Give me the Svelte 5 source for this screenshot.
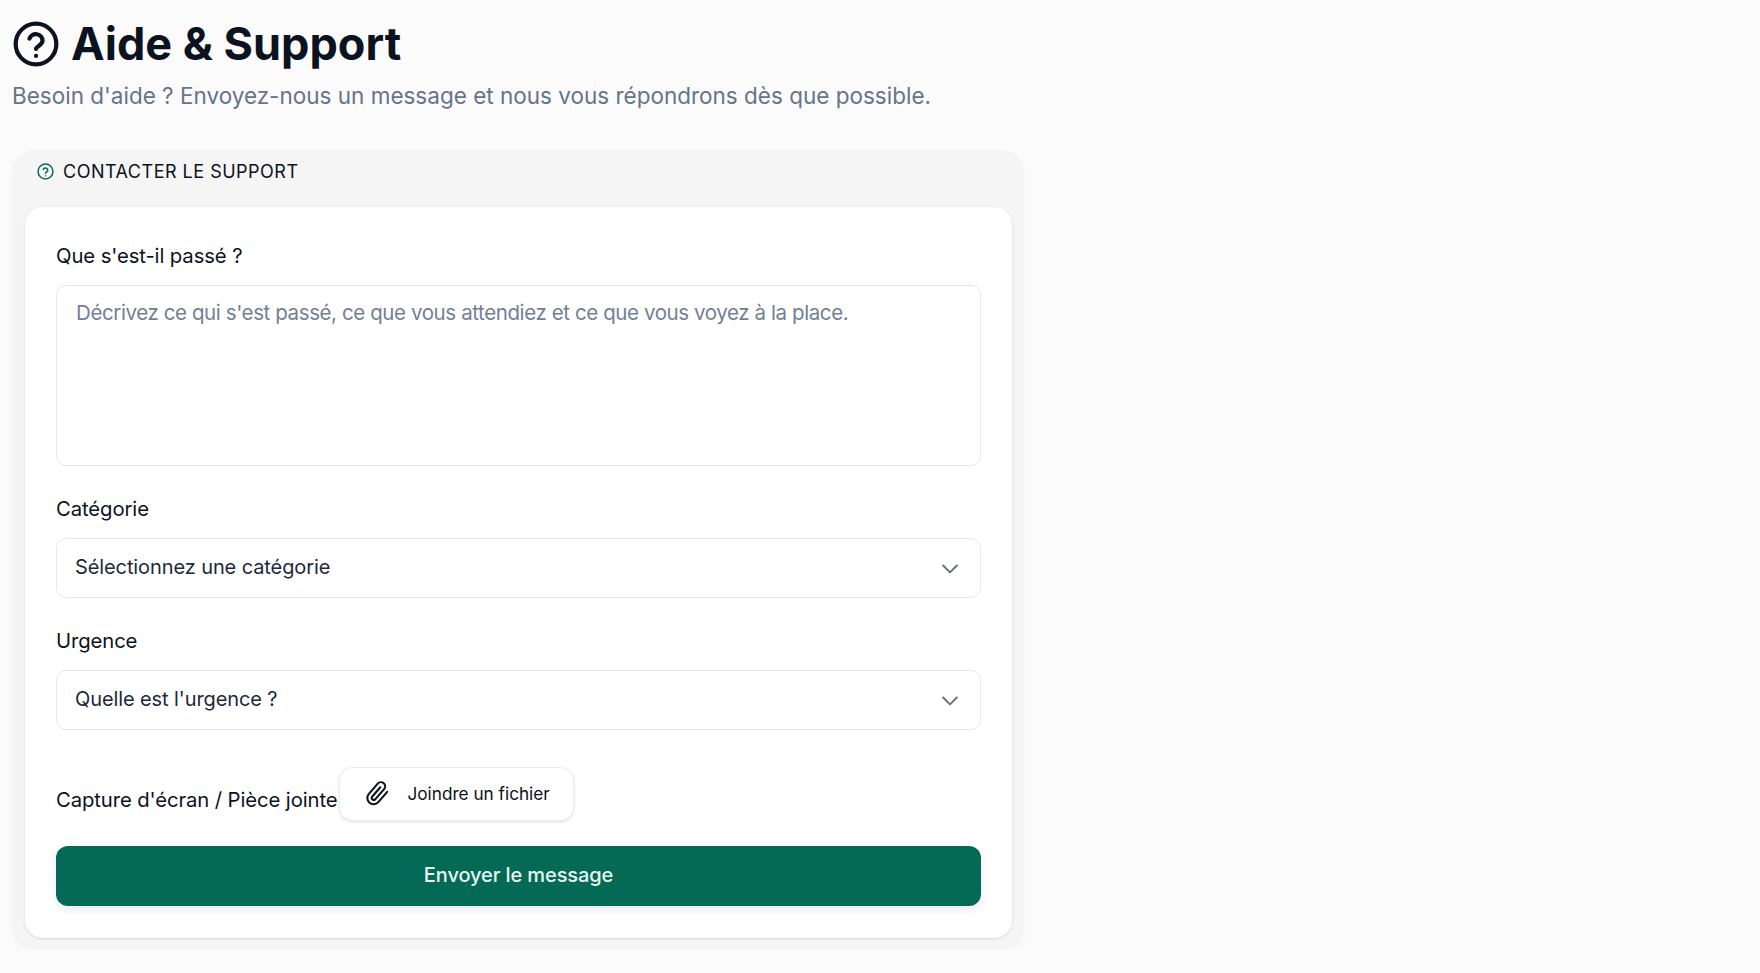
<script lang="ts">
	let message = $state('');
	let category = $state('');
	let urgency = $state('');
</script>

<main class="page">
	<header class="page-header">
		<h1>
			<svg class="title-icon" viewBox="0 0 24 24" fill="none" stroke="currentColor" stroke-width="2.2" stroke-linecap="round" stroke-linejoin="round">
				<circle cx="12" cy="12" r="10.6"></circle>
				<path d="M8.6 9.2a3.5 3.5 0 0 1 6.8 1.1c0 2.3-3.4 2.9-3.4 4.3"></path>
				<path d="M12 18.2h.01"></path>
			</svg>
			Aide &amp; Support
		</h1>
		<p class="subtitle">Besoin d'aide ? Envoyez-nous un message et nous vous répondrons dès que possible.</p>
	</header>

	<section class="panel">
		<div class="panel-title">
			<svg class="panel-icon" viewBox="0 0 24 24" fill="none" stroke="currentColor" stroke-width="2.2" stroke-linecap="round" stroke-linejoin="round">
				<circle cx="12" cy="12" r="10.5"></circle>
				<path d="M8.8 9.2a3.3 3.3 0 0 1 6.4 1c0 2.2-3.2 2.7-3.2 4.2"></path>
				<path d="M12 18h.01"></path>
			</svg>
			<span>CONTACTER LE SUPPORT</span>
		</div>

		<form class="card" onsubmit={(e) => e.preventDefault()}>
			<label class="field first">
				<span class="label">Que s'est-il passé ?</span>
				<textarea bind:value={message} placeholder="Décrivez ce qui s'est passé, ce que vous attendiez et ce que vous voyez à la place."></textarea>
			</label>

			<label class="field">
				<span class="label">Catégorie</span>
				<span class="select-wrap">
					<select bind:value={category}>
						<option value="">Sélectionnez une catégorie</option>
					</select>
					<svg class="chevron" viewBox="0 0 16 16" fill="none" stroke="currentColor" stroke-width="1.6" stroke-linecap="round" stroke-linejoin="round">
						<path d="M2.5 5.2 8 10.7l5.5-5.5"></path>
					</svg>
				</span>
			</label>

			<label class="field">
				<span class="label">Urgence</span>
				<span class="select-wrap">
					<select bind:value={urgency}>
						<option value="">Quelle est l'urgence ?</option>
					</select>
					<svg class="chevron" viewBox="0 0 16 16" fill="none" stroke="currentColor" stroke-width="1.6" stroke-linecap="round" stroke-linejoin="round">
						<path d="M2.5 5.2 8 10.7l5.5-5.5"></path>
					</svg>
				</span>
			</label>

			<div class="attach-row">
				<span class="label">Capture d'écran / Pièce jointe</span>
				<button type="button" class="attach">
					<svg class="clip" viewBox="0 0 24 24" fill="none" stroke="currentColor" stroke-width="2" stroke-linecap="round" stroke-linejoin="round">
						<path d="M21.4 11.1l-9.2 9.2a6 6 0 0 1-8.5-8.5l9.2-9.2a4 4 0 0 1 5.7 5.7l-9.2 9.2a2 2 0 0 1-2.8-2.8l8.5-8.5"></path>
					</svg>
					Joindre un fichier
				</button>
			</div>

			<button type="submit" class="submit">Envoyer le message</button>
		</form>
	</section>
</main>

<style>
	:global(body) {
		background: #fbfbfc;
		font-family: Inter, "Noto Sans", sans-serif;
		color: #0f172a;
	}

	.page {
		width: 1024px;
		padding: 17px 0 0 12px;
		box-sizing: border-box;
	}

	.page-header {
		margin-bottom: 38px;
	}

	h1 {
		display: flex;
		align-items: center;
		gap: 12px;
		margin: 0;
		height: 52px;
		padding-left: 1px;
		font-size: 45px;
		font-weight: 700;
		color: #0b1220;
	}

	.title-icon {
		width: 46px;
		height: 46px;
		flex: none;
		margin-top: 2px;
	}

	.subtitle {
		margin: 11px 0 0;
		font-size: 22.5px;
		line-height: 32px;
		color: #64748b;
	}

	.panel {
		background: #f5f5f5;
		border-radius: 22px;
		padding: 0 12px 12px 13px;
		box-shadow: 0 4px 10px rgba(0, 0, 0, 0.02);
	}

	.panel-title {
		display: flex;
		align-items: center;
		gap: 9px;
		height: 57px;
		padding: 0 0 15px 12px;
		box-sizing: border-box;
		font-size: 18px;
		letter-spacing: 0.5px;
		color: #0b1220;
	}

	.panel-icon {
		width: 17px;
		height: 17px;
		color: #0f6b57;
	}

	.card {
		background: #fff;
		border-radius: 18px;
		padding: 35px 31px 32px;
		box-shadow: 0 1px 3px rgba(0, 0, 0, 0.12);
	}

	.field {
		display: block;
		margin-top: 29px;
	}

	.field.first {
		margin-top: 0;
	}

	.label {
		display: block;
		font-size: 20.3px;
		line-height: 28px;
		letter-spacing: -0.1px;
		color: #0b1220;
	}

	textarea,
	select {
		display: block;
		width: 100%;
		box-sizing: border-box;
		margin: 0;
		border: 1px solid #e2e8f0;
		border-radius: 10px;
		background: #fff;
		font-family: inherit;
		font-size: 20px;
		letter-spacing: -0.1px;
		color: #1e293b;
		outline: none;
	}

	textarea {
		height: 181px;
		margin-top: 15px;
		padding: 13px 19px;
		font-size: 20.5px;
		line-height: 28px;
		letter-spacing: -0.4px;
		resize: none;
	}

	textarea::placeholder {
		color: #718096;
	}

	.select-wrap {
		display: block;
		position: relative;
		margin-top: 15px;
	}

	select {
		height: 60px;
		padding: 0 18px 2px;
		appearance: none;
	}

	.chevron {
		position: absolute;
		right: 21px;
		top: 21px;
		width: 20px;
		height: 20px;
		color: #6b7280;
		pointer-events: none;
	}

	.attach-row {
		display: flex;
		align-items: flex-end;
		gap: 2px;
		margin-top: 37px;
	}

	.attach-row .label {
		padding-bottom: 7px;
	}

	.attach {
		display: flex;
		align-items: center;
		gap: 17px;
		width: 235px;
		height: 54px;
		padding: 0 0 2px 25px;
		box-sizing: border-box;
		border: 1px solid #edf0f2;
		border-radius: 14px;
		background: #fff;
		box-shadow: 0 1px 3px rgba(0, 0, 0, 0.14);
		font-family: inherit;
		font-size: 17.2px;
		color: #0b1220;
	}

	.clip {
		width: 25px;
		height: 25px;
		flex: none;
		transform: rotate(-4deg);
	}

	.submit {
		display: block;
		width: 100%;
		height: 60px;
		margin-top: 25px;
		padding: 0 0 2px;
		border: none;
		border-radius: 12px;
		background: #046a56;
		box-shadow: 0 4px 10px rgba(0, 0, 0, 0.08);
		font-family: inherit;
		font-size: 20px;
		font-weight: 500;
		letter-spacing: -0.1px;
		color: #e8f7f1;
	}
</style>
